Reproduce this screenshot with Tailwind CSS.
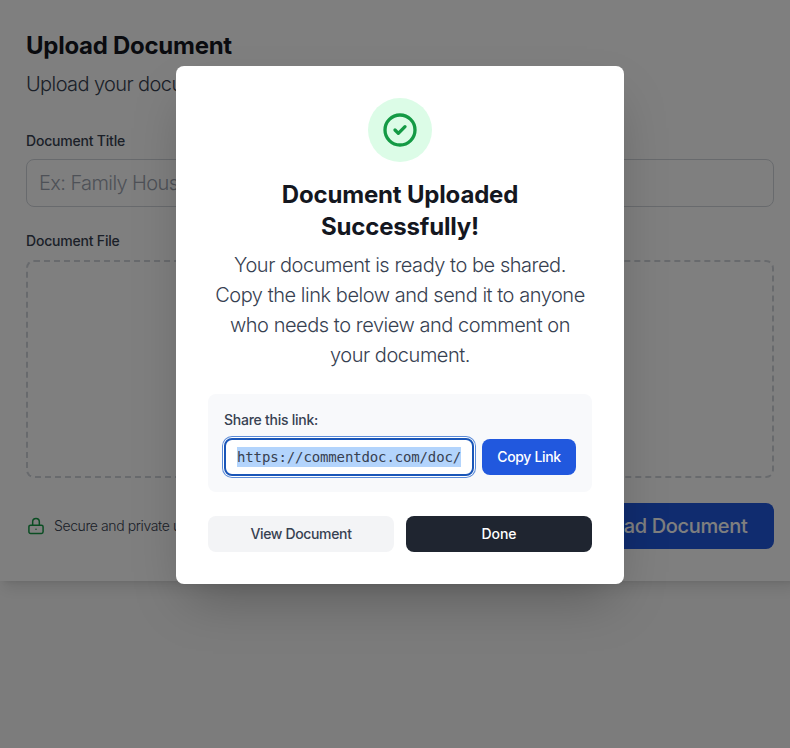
<!doctype html>
<html lang="en"><head><meta charset="utf-8"><script src="https://cdn.jsdelivr.net/npm/@tailwindcss/browser@4"></script><title>Upload Document</title></head>
<body class="bg-[#f9f9f9] font-['Inter','Noto_Sans',sans-serif] w-[790px] h-[748px] overflow-hidden relative">
<main class="bg-white shadow-lg w-[800px] h-[581px] px-[26px] pt-[27px]">
  <h1 class="text-2xl leading-[38px] font-bold tracking-[-0.27px] text-[#14171f]">Upload Document</h1>
  <p class="text-xl leading-[38px] font-light tracking-[-0.6px] text-[#374151]">Upload your document to get comments</p>
  <label class="block mt-[28px] text-sm leading-5 font-medium tracking-[-0.2px] text-[#374151]">Document Title</label>
  <div class="mt-2 h-12 border border-[#d1d5db] rounded-lg flex items-center px-3 text-xl font-light tracking-[-0.6px] text-[#9ca3af]">Ex: Family House Agreement</div>
  <label class="block mt-[24px] text-sm leading-5 font-medium tracking-[-0.2px] text-[#374151]">Document File</label>
  <div class="mt-[9px] h-[218px] border-2 border-dashed border-[#d1d5db] rounded-lg"></div>
  <div class="mt-[25px] flex items-center justify-between">
    <div class="flex items-center gap-2 text-sm font-light tracking-[-0.4px] text-[#374151]">
      <svg class="w-5 h-5 text-[#149a45]" fill="none" stroke="currentColor" stroke-width="1.800" viewBox="0 0 24 24"><path stroke-linecap="round" stroke-linejoin="round" d="M5.500 11h13a2 2 0 012 2v6a2 2 0 01-2 2h-13a2 2 0 01-2-2v-6a2 2 0 012-2zM8 11V7a4 4 0 018 0v4M12 16h.01"/></svg>
      <span>Secure and private uploads</span>
    </div>
    <button class="h-[46px] w-[220px] bg-[#2158de] rounded-lg text-xl font-medium tracking-[-0.35px] text-white">Upload Document</button>
  </div>
</main>
<div class="absolute top-0 left-0 w-[800px] h-[748px] bg-black/50 flex justify-center items-start pt-[66px]">
  <section class="w-[448px] h-[518px] bg-white rounded-lg p-8 shadow-2xl">
    <div class="mx-auto w-16 h-16 rounded-full bg-[#dcfce7] flex items-center justify-center">
      <svg class="w-10 h-10 text-[#149a45]" fill="none" stroke="currentColor" stroke-width="2" viewBox="0 0 24 24"><path stroke-linecap="round" stroke-linejoin="round" d="M9 12l2 2 4-4m6 2a9 9 0 11-18 0 9 9 0 0118 0z"/></svg>
    </div>
    <h2 class="mt-[17px] text-2xl leading-8 font-bold tracking-[-0.18px] text-[#14171f] text-center">Document Uploaded Successfully!</h2>
    <p class="mt-[7px] text-xl leading-[30px] font-light tracking-[-0.46px] text-[#374151] text-center">Your document is ready to be shared.<br>Copy the link below and send it to anyone<br>who needs to review and comment on<br>your document.</p>
    <div class="mt-6 h-[98px] bg-[#f8f9fb] rounded-lg p-4">
      <div class="text-sm leading-5 font-medium tracking-[-0.25px] text-[#374151]">Share this link:</div>
      <div class="mt-2 flex items-center gap-2">
        <div class="w-[250px] h-[38px] rounded-lg border-2 border-[#1a56b8] shadow-[0_0_0_1px_#fff,0_0_0_2px_#5b8bd8] bg-white flex items-center pl-[11px] overflow-hidden font-['DejaVu_Sans_Mono',monospace] text-sm text-[#374151]"><span class="bg-[#b3d4fc] whitespace-nowrap leading-5 tracking-[-0.13px]">https://commentdoc.com/doc/</span></div>
        <button class="w-[94px] h-9 rounded-lg bg-[#2158de] text-sm font-medium tracking-[-0.33px] text-white">Copy Link</button>
      </div>
    </div>
    <div class="mt-6 grid grid-cols-2 gap-3">
      <button class="h-9 rounded-lg bg-[#f3f4f6] text-sm font-medium tracking-[-0.35px] text-[#374151]">View Document</button>
      <button class="h-9 rounded-lg bg-[#1f2530] text-sm font-medium text-white">Done</button>
    </div>
  </section>
</div>
</body></html>
